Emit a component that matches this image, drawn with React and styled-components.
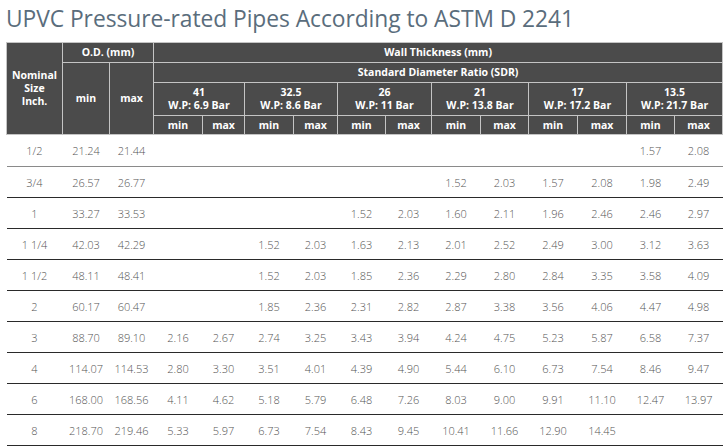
import React from 'react'
import styled, { createGlobalStyle } from 'styled-components'

const GlobalStyle = createGlobalStyle`
  body {
    margin: 0;
    background: #fff;
    font-family: 'Open Sans', 'Liberation Sans', sans-serif;
  }
`

const Page = styled.div`
  padding: 0 3px 0 6px;
  width: 725px;
  box-sizing: border-box;
`

const Title = styled.h1`
  margin: 0;
  height: 42px;
  padding-top: 3px;
  box-sizing: border-box;
  font-size: 22.8px;
  font-weight: 400;
  color: #5a6d7c;
  letter-spacing: -0.05px;
  white-space: nowrap;
`

const Table = styled.table`
  width: 716px;
  border-collapse: collapse;
  table-layout: fixed;
`

const Th = styled.th`
  background: #4b4b4b;
  color: #fff;
  font-size: 10.5px;
  font-weight: 700;
  line-height: 13px;
  border: 1px solid #c4c4c4;
  padding: 0;
  height: ${props => props.h || 19}px;
  text-align: center;
  white-space: nowrap;
`

const Tr = styled.tr``

const Td = styled.td`
  height: ${props => (props.first ? 31 : 30)}px;
  padding: 0;
  text-align: center;
  font-size: 11px;
  font-weight: 300;
  color: #555;
  border-bottom: 1.5px solid ${props => (props.first ? '#8a8a8a' : '#2a2a2a')};
`

const widths = [56, 47, 44, 49, 42, 49, 44, 48, 46, 49, 48, 49, 49, 48, 48]

const groups = [
  ['41', '6.9'],
  ['32.5', '8.6'],
  ['26', '11'],
  ['21', '13.8'],
  ['17', '17.2'],
  ['13.5', '21.7'],
]

const rows = [
  ['1/2', '21.24', '21.44', '', '', '', '', '', '', '', '', '', '', '1.57', '2.08'],
  ['3/4', '26.57', '26.77', '', '', '', '', '', '', '1.52', '2.03', '1.57', '2.08', '1.98', '2.49'],
  ['1', '33.27', '33.53', '', '', '', '', '1.52', '2.03', '1.60', '2.11', '1.96', '2.46', '2.46', '2.97'],
  ['1 1/4', '42.03', '42.29', '', '', '1.52', '2.03', '1.63', '2.13', '2.01', '2.52', '2.49', '3.00', '3.12', '3.63'],
  ['1 1/2', '48.11', '48.41', '', '', '1.52', '2.03', '1.85', '2.36', '2.29', '2.80', '2.84', '3.35', '3.58', '4.09'],
  ['2', '60.17', '60.47', '', '', '1.85', '2.36', '2.31', '2.82', '2.87', '3.38', '3.56', '4.06', '4.47', '4.98'],
  ['3', '88.70', '89.10', '2.16', '2.67', '2.74', '3.25', '3.43', '3.94', '4.24', '4.75', '5.23', '5.87', '6.58', '7.37'],
  ['4', '114.07', '114.53', '2.80', '3.30', '3.51', '4.01', '4.39', '4.90', '5.44', '6.10', '6.73', '7.54', '8.46', '9.47'],
  ['6', '168.00', '168.56', '4.11', '4.62', '5.18', '5.79', '6.48', '7.26', '8.03', '9.00', '9.91', '11.10', '12.47', '13.97'],
  ['8', '218.70', '219.46', '5.33', '5.97', '6.73', '7.54', '8.43', '9.45', '10.41', '11.66', '12.90', '14.45', '', ''],
]

const App = () => (
  <Page>
    <GlobalStyle />
    <Title>UPVC Pressure-rated Pipes According to ASTM D 2241</Title>
    <Table>
      <colgroup>
        {widths.map((w, i) => (
          <col key={i} style={{ width: w }} />
        ))}
      </colgroup>
      <thead>
        <Tr>
          <Th rowSpan={4}>
            Nominal
            <br />
            Size
            <br />
            Inch.
          </Th>
          <Th colSpan={2} h={19}>O.D. (mm)</Th>
          <Th colSpan={12} h={19}>Wall Thickness (mm)</Th>
        </Tr>
        <Tr>
          <Th rowSpan={3}>min</Th>
          <Th rowSpan={3}>max</Th>
          <Th colSpan={12} h={19}>Standard Diameter Ratio (SDR)</Th>
        </Tr>
        <Tr>
          {groups.map(([sdr, wp]) => (
            <Th key={sdr} colSpan={2} h={32}>
              {sdr}
              <br />
              W.P: {wp} Bar
            </Th>
          ))}
        </Tr>
        <Tr>
          {groups.map(([sdr]) => (
            <React.Fragment key={sdr}>
              <Th h={18}>min</Th>
              <Th h={18}>max</Th>
            </React.Fragment>
          ))}
        </Tr>
      </thead>
      <tbody>
        {rows.map((row, i) => (
          <Tr key={i}>
            {row.map((v, j) => (
              <Td key={j} first={i === 0}>
                {v}
              </Td>
            ))}
          </Tr>
        ))}
      </tbody>
    </Table>
  </Page>
)

export default App
